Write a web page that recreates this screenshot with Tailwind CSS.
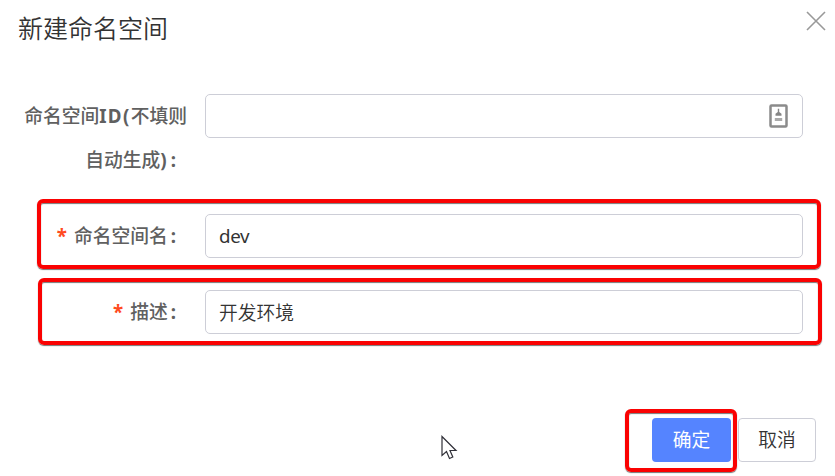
<!DOCTYPE html>
<html lang="zh-CN">
<head>
<meta charset="utf-8">
<title>新建命名空间</title>
<script src="https://cdn.jsdelivr.net/npm/@tailwindcss/browser@4"></script>
</head>
<body class="bg-white">
<main class="relative flex h-[476px] w-[835px] flex-col overflow-hidden bg-white font-['Noto_Sans','Noto_Sans_CJK_SC',sans-serif] text-[18.75px] text-[#333]">
  <header class="flex h-[94px] items-start justify-between pl-[18px] pr-[9px]">
    <h1 class="mt-[10px] text-[25px] font-[350] leading-[36px] whitespace-nowrap">新建命名空间</h1>
    <button class="mt-[11px] h-5 w-5" aria-label="关闭">
      <svg class="block h-5 w-5" viewBox="0 0 20 20" fill="none" stroke="#999" stroke-width="1.6"><path d="M1 1L19 19M19 1L1 19"/></svg>
    </button>
  </header>
  <form class="flex flex-col">
    <div class="flex h-[120px] items-start">
      <label class="flex w-[205px] flex-col items-end font-medium leading-[44px] text-[#606060] whitespace-nowrap">
        <span class="pr-[18px]">命名空间<span class="font-bold tracking-[1.4px]">ID(</span>不填则</span>
        <span class="pr-[29px]">自动生成<span class="font-bold">)<span class="ml-[4px]">:</span></span></span>
      </label>
      <div class="flex h-11 w-[598px] items-center justify-end rounded-[5px] border-[1.5px] border-[#cdced7] pr-[14px]">
        <svg class="h-6 w-[19px]" viewBox="0 0 19 24" fill="none"><rect x="1.5" y="1.5" width="16" height="21" rx="1" stroke="#8b8b8b" stroke-width="2.5"/><path d="M8.8 4.8h1.4V8l2.3 1.8v2h-6v-2L8.8 8z" fill="#858585"/><path d="M5.8 15.5h7.4" stroke="#aaa" stroke-width="3"/></svg>
      </div>
    </div>
    <div class="flex h-[76px] items-start">
      <label class="w-[205px] pr-[29px] text-right font-medium leading-[44px] text-[#606060] whitespace-nowrap"><span class="mr-[7px] font-bold text-[#ff4a20]">*</span>命名空间名<span class="ml-[3px] font-bold">:</span></label>
      <div class="flex h-11 w-[598px] items-center rounded-[5px] border-[1.5px] border-[#cdced7] pl-[13px] tracking-[-0.4px]">dev</div>
    </div>
    <div class="flex h-[128px] items-start">
      <label class="w-[205px] pr-[29px] text-right font-medium leading-[44px] text-[#606060] whitespace-nowrap"><span class="mr-[7px] font-bold text-[#ff4a20]">*</span>描述<span class="ml-[3px] font-bold">:</span></label>
      <div class="flex h-11 w-[598px] items-center rounded-[5px] border-[1.5px] border-[#cdced7] pl-[13px] pt-0.5 font-[350]">开发环境</div>
    </div>
  </form>
  <footer class="flex justify-end gap-[7px] pr-[19px] font-[350]">
    <button type="button" class="h-11 w-[79px] rounded-[4px] bg-[#5584ff] font-normal text-white">确定</button>
    <button type="button" class="h-11 w-[78px] rounded-[4px] border-[1.5px] border-[#cdced7] bg-white">取消</button>
  </footer>

  <!-- Highlight frames and pointer overlay the form -->
  <div class="absolute left-[37px] top-[199px] h-[70px] w-[784px] rounded-[6px] border-4 border-[#fa0202] shadow-[0_1px_1px_#777,inset_0_1px_1px_#777]"></div>
  <div class="absolute left-[38px] top-[278px] h-[67px] w-[784px] rounded-[6px] border-4 border-[#fa0202] shadow-[0_1px_1px_#777,inset_0_1px_1px_#777]"></div>
  <div class="absolute left-[625px] top-[409px] h-[63px] w-[112px] rounded-[6px] border-4 border-[#fa0202] shadow-[0_1px_1px_#777,inset_0_1px_1px_#777]"></div>
  <svg class="absolute left-[441px] top-[435px] h-[26px] w-[17px]" viewBox="0 0 17 26"><path d="M1 1.5V20.5L5.5 16.5L8.5 23.5L11.8 22L9 15.5H15Z" fill="#fff" stroke="#303038" stroke-width="1.2"/></svg>
</main>
</body>
</html>
